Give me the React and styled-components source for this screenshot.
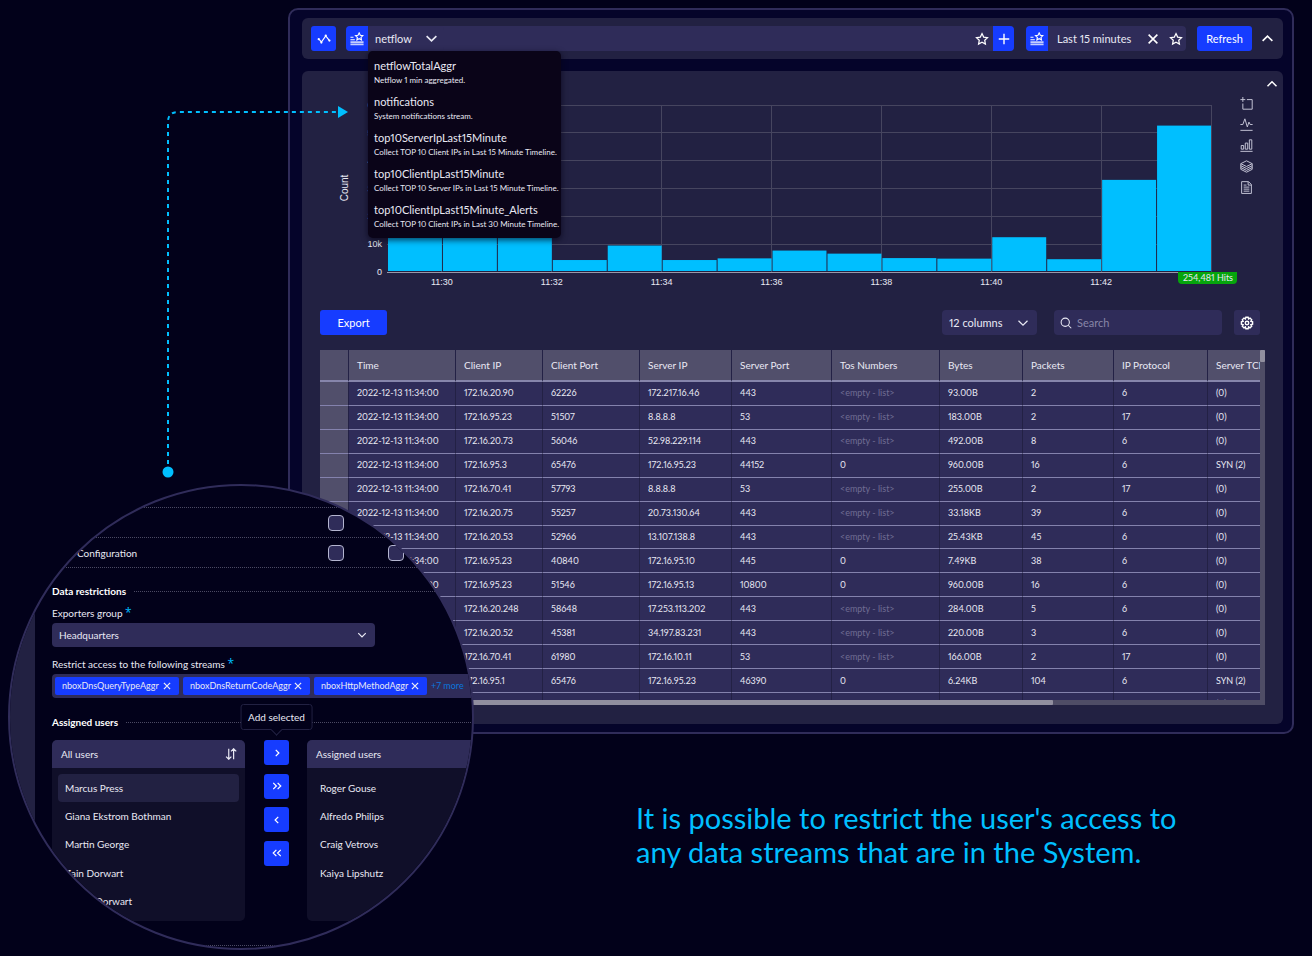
import React from "react";
import styled, { createGlobalStyle, css } from "styled-components";

const c = {
  page: "#02011a",
  frame: "#05042a",
  panel: "#222142",
  field: "#2f2c59",
  line: "#302c5a",
  dots: "#4b4a63",
  blue: "#163cff",
  cyan: "#00bfff",
  text: "#e9e9f4",
  muted: "#6f6d93",
};

const GlobalStyle = createGlobalStyle`
  *, *::before, *::after { box-sizing: border-box; }
  body {
    margin: 0;
    background: ${c.page};
    color: ${c.text};
    font-family: Lato, "Open Sans", sans-serif;
    font-size: 11px;
    font-variant-numeric: proportional-nums;
    line-height: 14px;
  }
  button, input, select { font: inherit; color: inherit; margin: 0; }
  ul { list-style: none; margin: 0; padding: 0; }
`;

const Page = styled.div`
  position: relative;
  min-height: 100vh;
  overflow: hidden;
  padding: 8px 18px 86px 288px;
`;

const Frame = styled.main`
  display: flex;
  flex-direction: column;
  gap: 12px;
  padding: 8px 9px 8px 12px;
  border: 2px solid ${c.line};
  border-radius: 10px;
  background: ${c.frame};
`;

const Toolbar = styled.header`
  display: flex;
  align-items: center;
  padding: 8px 3px 8px 9px;
  border-radius: 6px;
  background: ${c.panel};
`;

const Button = styled.button`
  display: flex;
  align-items: center;
  justify-content: center;
  flex: none;
  width: ${(p) => p.$width || 25}px;
  height: 25px;
  padding: 0;
  border: 0;
  border-radius: ${(p) => p.$radius || "3px"};
  background: ${(p) => (p.$plain ? "transparent" : p.$quiet ? c.field : c.blue)};
  color: #fff;
`;

const FieldGroup = styled.div`
  position: relative;
  display: flex;
  align-items: center;
  flex: ${(p) => (p.$grow ? "1" : "none")};
  height: 25px;
  margin-left: ${(p) => p.$gap}px;
  border-radius: 4px;
  background: ${c.field};
`;

const Actions = styled.div`
  display: flex;
  gap: 3px;
  margin-left: 11px;
`;

const SelectBox = styled.div`
  position: relative;
  display: flex;
  align-items: center;
  flex: none;
  width: ${(p) => p.$width}px;
  height: ${(p) => p.$height || 25}px;
  border-radius: 4px;
  background: ${c.field};
  svg { position: absolute; right: ${(p) => p.$inset || 8}px; pointer-events: none; }
  select {
    width: 100%;
    height: 100%;
    padding: 0 24px 0 7px;
    border: 0;
    background: transparent;
    appearance: none;
  }
`;

const Spacer = styled.div`
  flex: 1;
`;

const Period = styled.span`
  width: 93px;
  padding-left: 9px;
`;

const Menu = styled.ul`
  position: absolute;
  z-index: 1;
  top: 25px;
  left: 22px;
  width: 193px;
  padding: 8px 0 5px 6px;
  border-radius: 5px;
  background: #0a0418;
  box-shadow: 0 2px 6px rgba(5, 3, 20, 0.7);
  white-space: nowrap;
`;

const MenuItem = styled.li`
  height: 36px;
  &:last-child { height: 30px; }
  strong { display: block; font-weight: 400; }
  small { display: block; font-size: 8px; line-height: 14px; }
`;

const Panel = styled.section`
  display: flex;
  flex-direction: column;
  padding: 0 18px 19px;
  border-radius: 6px;
  background: ${c.panel};
`;

const PanelHead = styled.div`
  display: flex;
  justify-content: flex-end;
  margin-right: -18px;
  height: 24px;
`;

const ChartRow = styled.div`
  display: flex;
  padding-right: 12px;
`;

const ChartSvg = styled.svg`
  flex: 1;
  min-width: 0;
  display: block;
  font-family: "Liberation Sans", Arial, sans-serif;
  font-size: 9px;
  fill: ${c.text};
`;

const Tools = styled.div`
  display: flex;
  flex-direction: column;
  flex: none;
  width: 15px;
  gap: 7px;
  padding-top: 1px;
  button {
    display: flex;
    align-items: center;
    justify-content: flex-end;
    width: 15px;
    height: 14px;
    padding: 0;
    border: 0;
    background: transparent;
    color: #c4c4d6;
  }
`;

const Controls = styled.div`
  display: flex;
  align-items: center;
  justify-content: space-between;
  margin: 15px 5px 15px 0;
`;

const Filters = styled.div`
  display: flex;
  align-items: center;
`;

const Search = styled.label`
  display: flex;
  align-items: center;
  gap: 5px;
  width: 168px;
  height: 25px;
  margin: 0 12px 0 17px;
  padding: 0 6px;
  border-radius: 4px;
  background: ${c.field};
  input {
    flex: 1;
    min-width: 0;
    padding: 0;
    border: 0;
    outline: 0;
    background: transparent;
  }
  input::placeholder { color: #8886a8; opacity: 1; }
`;

const Grid = styled.div`
  display: grid;
  grid-template-columns: minmax(0, 1fr) 5px;
  grid-template-rows: 350px 5px;
  background: #4f4d66;
`;

const Viewport = styled.div`
  overflow: hidden;
  background: ${c.field};
`;

const Thumb = styled.div`
  background: #918f9f;
  border-radius: 1px;
  ${(p) => (p.$vertical ? css`height: 12px;` : css`width: 78%;`)}
`;

const Table = styled.table`
  table-layout: fixed;
  width: 100%;
  min-width: 988px;
  height: 367px;
  border-collapse: separate;
  border-spacing: 0;
  text-align: left;
  white-space: nowrap;
  th, td {
    padding: 0 0 0 8px;
    border-right: 1px solid #232145;
    border-bottom: 1px solid #8482ad;
    font-size: 9px;
    line-height: 12px;
    font-weight: 400;
  }
  th {
    height: 32px;
    border-bottom: 2px solid #8685ab;
    background: #514f6b;
    font-size: 10px;
  }
  td:first-child { background: #514f6b; }
`;

const Empty = styled.span`
  color: ${c.muted};
`;

const Headline = styled.p`
  margin: 67px 0 0 348px;
  color: ${c.cyan};
  font-size: 29px;
  line-height: 34px;
  font-weight: 400;
`;

const Connector = styled.svg`
  position: absolute;
  left: 160px;
  top: 104px;
`;

const Lens = styled.section`
  position: absolute;
  left: 8px;
  top: 484px;
  display: flex;
  width: 466px;
  height: 466px;
  overflow: hidden;
  border: 2px solid ${c.line};
  border-radius: 50%;
  background: ${c.page};
  font-size: 10px;
  white-space: nowrap;
`;

const LensSide = styled.div`
  flex: none;
  width: 25px;
  background: ${c.panel};
`;

const LensBody = styled.form`
  flex: none;
  display: flex;
  flex-direction: column;
  width: 470px;
  padding: 21px 0 0 17px;
`;

const Permission = styled.label`
  display: flex;
  align-items: center;
  height: 30px;
  border-top: 1px dotted ${c.dots};
  span { width: 276px; padding-left: 25px; }
`;

const Check = styled.input`
  appearance: none;
  flex: none;
  width: 16px;
  height: 16px;
  && { margin-right: 44px; }
  border: 1px solid #b4b5d0;
  border-radius: 4px;
  background: ${c.field};
`;

const Heading = styled.h2`
  display: flex;
  align-items: center;
  gap: 8px;
  height: 14px;
  margin: ${(p) => p.$top}px 0 0;
  font-size: 10px;
  line-height: 14px;
  font-weight: 700;
  color: #fff;
  &::after { content: ""; flex: 1; border-top: 1px dotted ${c.dots}; }
`;

const Label = styled.label`
  margin: ${(p) => p.$top}px 0 3px;
  line-height: 14px;
  sup {
    color: ${c.cyan};
    font-family: "Open Sans", sans-serif;
    font-size: 12px;
    line-height: 0;
    vertical-align: 0;
  }
`;

const Chips = styled.div`
  display: flex;
  align-items: center;
  gap: 4px;
  height: 24px;
  padding-left: 3px;
  border-radius: 4px;
  background: ${c.field};
  font-size: 9px;
  a { color: #0a76dc; text-decoration: none; }
`;

const Chip = styled.span`
  display: flex;
  align-items: center;
  justify-content: space-between;
  flex: none;
  width: ${(p) => p.$width}px;
  height: 18px;
  padding: 0 7px;
  border-radius: 2px;
  background: ${c.blue};
  button { display: flex; padding: 0; border: 0; background: transparent; }
`;

const Transfer = styled.div`
  display: flex;
  margin-top: 11px;
  height: 181px;
`;

const UserList = styled.div`
  display: flex;
  flex-direction: column;
  flex: none;
  width: 193px;
  overflow: hidden;
  border-radius: 5px;
  background: #100f29;
  header {
    display: flex;
    align-items: center;
    justify-content: space-between;
    height: 28px;
    padding: 0 8px 0 9px;
    background: ${c.field};
  }
  ul {
    flex: 1;
    display: grid;
    grid-template-rows: repeat(5, 1fr);
    padding: 6px;
  }
`;

const User = styled.li`
  display: flex;
  align-items: center;
  padding-left: 7px;
  border-radius: 4px;
  background: ${(p) => (p.$selected ? c.panel : "transparent")};
`;

const Moves = styled.div`
  position: relative;
  display: flex;
  flex-direction: column;
  justify-content: space-between;
  height: 126px;
  margin: 0 18px 0 19px;
`;

const Tip = styled.div`
  position: absolute;
  left: 50%;
  bottom: calc(100% + 10px);
  transform: translateX(-50%);
  padding: 5px 7px;
  border: 1px solid ${c.panel};
  border-radius: 3px;
  background: ${c.page};
  &::after {
    content: "";
    position: absolute;
    left: 50%;
    bottom: -5px;
    width: 8px;
    height: 8px;
    border: solid ${c.panel};
    border-width: 0 1px 1px 0;
    background: ${c.page};
    transform: translateX(-50%) rotate(45deg);
  }
`;

const Rule = styled.hr`
  width: 100%;
  margin: ${(p) => p.$top}px 0 0;
  border: 0;
  border-top: 1px dotted ${c.dots};
`;

const icons = {
  trend: (
    <>
      <path d="M2.500 8.500L5 11.500l5-7 4 5" />
      <g fill="currentColor" stroke="none">
        <circle cx="2" cy="8.200" r="1.300" />
        <circle cx="5" cy="12" r="1.300" />
        <circle cx="10" cy="4.200" r="1.300" />
        <circle cx="14.200" cy="9.800" r="1.300" />
      </g>
    </>
  ),
  star: <path d="M8 1.8l1.9 4 4.4.6-3.2 3 .8 4.4L8 11.7l-3.9 2.1.8-4.4-3.2-3 4.4-.6z" />,
  savedQuery: (
    <>
      <path d="M10.500 1l1.300 2.700 2.900.4-2.100 2 .5 2.900-2.600-1.400L7.900 9l.5-2.900-2.100-2 2.900-.4z" />
      <path d="M.5 6h3.500M.5 8.800h5" />
      <path d="M.5 11.500h15M.5 14.200h15" strokeWidth="2" strokeOpacity=".75" />
    </>
  ),
  plus: <path d="M8 2v12M2 8h12" />,
  close: <path d="M3 3l10 10M13 3L3 13" />,
  down: <path d="M2 5l6 6 6-6" />,
  up: <path d="M2 11l6-6 6 6" />,
  right: <path d="M6 3l5 5-5 5" />,
  left: <path d="M10 3L5 8l5 5" />,
  rights: <path d="M2 3l5 5-5 5M9 3l5 5-5 5" />,
  lefts: <path d="M7 3L2 8l5 5M14 3L9 8l5 5" />,
  search: (
    <>
      <circle cx="7" cy="7" r="5.500" />
      <path d="M11 11l4 4" />
    </>
  ),
  gear: (
    <>
      <path d="M6.700 1.500h2.600l.5 1.900 1.700-1 1.900 1.900-1 1.700 2 .6v2.700l-2 .6 1 1.700-1.900 1.900-1.700-1-.5 2H6.700l-.5-2-1.700 1-1.900-1.900 1-1.700-2-.6V6.600l2-.6-1-1.700 1.900-1.900 1.700 1z" />
      <circle cx="8" cy="8" r="2" />
    </>
  ),
  sort: <path d="M5 1v14M1.500 11.500L5 15l3.500-3.500M11.500 15V1M8 4.500L11.500 1 15 4.500" />,
  zoomArea: <path d="M3.500 0v6M.5 3.200h6M3.500 8v7h11.500V3.200H8.500" />,
  pulse: <path d="M.5 8h3l2.500-7 3 10 2-6 1.500 3h3M.5 15.200h15" />,
  bars: <path d="M.5 15.200h15M1.500 12.500V8h3v4.500zM6.500 12.500V5h3v7.500zM11.500 12.500V1h3v11.500z" />,
  layers: (
    <path d="M8 1l7 3.500L8 8 1 4.500zM1 7l7 3.500L15 7M1 9.300l7 3.500 7-3.500M1 11.500L8 15l7-3.500M1 4.500v7M15 4.500v7" />
  ),
  page: <path d="M2 .8h8.500l3.500 3.500v11H2zM10 1v4h4M4.500 5H8M4.500 7.500h7M4.500 10h7M4.500 12.500h7" />,
};

function Icon({ name, size = 14, weight = 1.4 }) {
  return (
    <svg width={size} height={size} viewBox="0 0 16 16" fill="none" stroke="currentColor" strokeWidth={weight} aria-hidden="true">
      {icons[name]}
    </svg>
  );
}

const streams = [
  ["netflowTotalAggr", "Netflow 1 min aggregated."],
  ["notifications", "System notifications stream."],
  ["top10ServerIpLast15Minute", "Collect TOP 10 Client IPs in Last 15 Minute Timeline."],
  ["top10ClientIpLast15Minute", "Collect TOP 10 Server IPs in Last 15 Minute Timeline."],
  ["top10ClientIpLast15Minute_Alerts", "Collect TOP 10 Client IPs in Last 30 Minute Timeline."],
];

const columns = [
  ["", 29], ["Time", 107], ["Client IP", 87], ["Client Port", 97], ["Server IP", 92], ["Server Port", 100],
  ["Tos Numbers", 108], ["Bytes", 83], ["Packets", 91], ["IP Protocol", 94], ["Server TCP Flags", 100],
];

const rows = [
  ["172.16.20.90", "62226", "172.217.16.46", "443", "", "93.00B", "2", "6", "(0)"],
  ["172.16.95.23", "51507", "8.8.8.8", "53", "", "183.00B", "2", "17", "(0)"],
  ["172.16.20.73", "56046", "52.98.229.114", "443", "", "492.00B", "8", "6", "(0)"],
  ["172.16.95.3", "65476", "172.16.95.23", "44152", "0", "960.00B", "16", "6", "SYN (2)"],
  ["172.16.70.41", "57793", "8.8.8.8", "53", "", "255.00B", "2", "17", "(0)"],
  ["172.16.20.75", "55257", "20.73.130.64", "443", "", "33.18KB", "39", "6", "(0)"],
  ["172.16.20.53", "52966", "13.107.138.8", "443", "", "25.43KB", "45", "6", "(0)"],
  ["172.16.95.23", "40840", "172.16.95.10", "445", "0", "7.49KB", "38", "6", "(0)"],
  ["172.16.95.23", "51546", "172.16.95.13", "10800", "0", "960.00B", "16", "6", "(0)"],
  ["172.16.20.248", "58648", "17.253.113.202", "443", "", "284.00B", "5", "6", "(0)"],
  ["172.16.20.52", "45381", "34.197.83.231", "443", "", "220.00B", "3", "6", "(0)"],
  ["172.16.70.41", "61980", "172.16.10.11", "53", "", "166.00B", "2", "17", "(0)"],
  ["172.16.95.1", "65476", "172.16.95.23", "46390", "0", "6.24KB", "104", "6", "SYN (2)"],
  ["172.16.95.1", "65476", "172.16.95.23", "46390", "0", "6.24KB", "104", "6", "(0)"],
];

const counts = [15.5, 15.5, 15.5, 4.3, 9.5, 4.3, 4.9, 7.7, 6.6, 5, 4.8, 12.5, 4.6, 33.1, 52.6];
const plot = { left: 67, right: 891, top: 10, bottom: 177 };

function Chart() {
  const step = (plot.right - plot.left) / counts.length;
  const unit = (plot.bottom - plot.top) / 60;
  const levels = [0, 10, 20, 30, 40, 50, 60];
  const ticks = ["11:30", "11:32", "11:34", "11:36", "11:38", "11:40", "11:42"];
  return (
    <ChartSvg viewBox="0 0 918 200" role="img" aria-label="Flow count by minute">
      <g shapeRendering="crispEdges">
        {levels.map((n) => (
          <path key={n} d={`M${plot.left} ${plot.bottom - n * unit}H${plot.right}`} stroke={n ? "#46455f" : "#9a99aa"} />
        ))}
        {[...ticks, ""].map((t, i) => (
          <path key={i} d={`M${plot.left + (i * 2 + 1) * step} ${plot.top}V${plot.bottom}`} stroke="#46455f" />
        ))}
      </g>
      {counts.map((n, i) => (
        <rect key={i} x={plot.left + i * step + 1} y={plot.bottom - n * unit} width={step - 1} height={n * unit - 1} fill={c.cyan} />
      ))}
      {levels.map((n) => (
        <text key={n} x="62" y={plot.bottom - n * unit + 3} textAnchor="end">{n ? `${n}k` : "0"}</text>
      ))}
      {ticks.map((t, i) => (
        <text key={t} x={plot.left + (i * 2 + 1) * step} y="190" textAnchor="middle">{t}</text>
      ))}
      <text transform="translate(28 93) rotate(-90)" textAnchor="middle" fontSize="10">Count</text>
      <path d="M858 177h59v8a4 4 0 0 1-4 4h-51a4 4 0 0 1-4-4z" fill="#06a50c" />
      <text x="888" y="186" textAnchor="middle" fontFamily="Lato, sans-serif">254,481 Hits</text>
    </ChartSvg>
  );
}

function StreamTable() {
  return (
    <Grid>
      <Viewport>
        <Table>
          <colgroup>
            {columns.map(([name, width]) => <col key={name} style={{ width }} />)}
          </colgroup>
          <thead>
            <tr>{columns.map(([name]) => <th key={name} scope="col">{name}</th>)}</tr>
          </thead>
          <tbody>
            {rows.map((row, i) => (
              <tr key={i}>
                <td />
                <td>2022-12-13 11:34:00</td>
                {row.map((cell, j) => <td key={j}>{cell || <Empty>&lt;empty - list&gt;</Empty>}</td>)}
              </tr>
            ))}
          </tbody>
        </Table>
      </Viewport>
      <Thumb $vertical />
      <Thumb />
    </Grid>
  );
}

function AccessLens() {
  return (
    <Lens aria-label="Access restrictions">
      <LensSide />
      <LensBody>
        <Permission>
          <span />
          <Check type="checkbox" aria-label="Read" />
        </Permission>
        <Permission>
          <span>Configuration</span>
          <Check type="checkbox" />
          <Check type="checkbox" aria-label="Write" />
        </Permission>
        <Rule $top={0} />
        <Heading $top={16}>Data restrictions</Heading>
        <Label $top={8} htmlFor="group">Exporters group <sup>*</sup></Label>
        <SelectBox $width={323} $height={24}>
          <select id="group"><option>Headquarters</option></select>
          <Icon name="down" size={10} weight={2} />
        </SelectBox>
        <Label $top={10} as="p">Restrict access to the following streams <sup>*</sup></Label>
        <Chips>
          {[["nboxDnsQueryTypeAggr", 124], ["nboxDnsReturnCodeAggr", 127], ["nboxHttpMethodAggr", 113]].map(([name, width]) => (
            <Chip key={name} $width={width}>
              {name}
              <button type="button" aria-label={`Remove ${name}`}><Icon name="close" size={10} weight={2} /></button>
            </Chip>
          ))}
          <a href="#streams">+7 more</a>
        </Chips>
        <Heading $top={17}>Assigned users</Heading>
        <Transfer>
          <UserList>
            <header>All users <Icon name="sort" size={12} weight={1.6} /></header>
            <ul>
              {["Marcus Press", "Giana Ekstrom Bothman", "Martin George", "Zain Dorwart", "Emery Dorwart"].map((name, i) => (
                <User key={name} $selected={i === 0}>{name}</User>
              ))}
            </ul>
          </UserList>
          <Moves>
            <Tip role="tooltip">Add selected</Tip>
            <Button type="button" aria-label="Add selected"><Icon name="right" size={10} weight={2} /></Button>
            <Button type="button" aria-label="Add all"><Icon name="rights" size={10} weight={2} /></Button>
            <Button type="button" aria-label="Remove selected"><Icon name="left" size={10} weight={2} /></Button>
            <Button type="button" aria-label="Remove all"><Icon name="lefts" size={10} weight={2} /></Button>
          </Moves>
          <UserList>
            <header>Assigned users</header>
            <ul>
              {["Roger Gouse", "Alfredo Philips", "Craig Vetrovs", "Kaiya Lipshutz"].map((name) => (
                <User key={name}>{name}</User>
              ))}
            </ul>
          </UserList>
        </Transfer>
        <Rule $top={24} />
      </LensBody>
    </Lens>
  );
}

export default function App() {
  return (
    <Page>
      <GlobalStyle />
      <Frame>
        <Toolbar>
          <Button aria-label="Trend"><Icon name="trend" /></Button>
          <FieldGroup $grow $gap={10}>
            <Button $width={22} $radius="4px 0 0 4px" aria-label="Saved streams"><Icon name="savedQuery" weight={1.3} /></Button>
            <SelectBox $width={76} $inset={6}>
              <select aria-label="Stream"><option>netflow</option></select>
              <Icon name="down" size={13} weight={2} />
            </SelectBox>
            <Spacer />
            <Button $plain $width={22} aria-label="Favourite stream"><Icon name="star" /></Button>
            <Button $width={21} $radius="0 4px 4px 0" aria-label="Add filter"><Icon name="plus" weight={1.6} /></Button>
            <Menu>
              {streams.map(([name, note]) => (
                <MenuItem key={name}><strong>{name}</strong><small>{note}</small></MenuItem>
              ))}
            </Menu>
          </FieldGroup>
          <FieldGroup $gap={12}>
            <Button $width={22} $radius="4px 0 0 4px" aria-label="Saved periods"><Icon name="savedQuery" weight={1.3} /></Button>
            <Period>Last 15 minutes</Period>
            <Button $plain $width={24} aria-label="Clear period"><Icon name="close" weight={1.8} /></Button>
            <Button $plain $width={21} aria-label="Favourite period"><Icon name="star" /></Button>
          </FieldGroup>
          <Actions>
            <Button $width={55}>Refresh</Button>
            <Button $plain aria-label="Collapse toolbar"><Icon name="up" size={13} weight={2} /></Button>
          </Actions>
        </Toolbar>
        <Panel>
          <PanelHead>
            <Button $plain $width={22} aria-label="Collapse chart"><Icon name="up" size={12} weight={2} /></Button>
          </PanelHead>
          <ChartRow>
            <Chart />
            <Tools>
              {["zoomArea", "pulse", "bars", "layers", "page"].map((name) => (
                <button key={name} aria-label={name}><Icon name={name} size={13} weight={1.2} /></button>
              ))}
            </Tools>
          </ChartRow>
          <Controls>
            <Button $width={67}>Export</Button>
            <Filters>
              <SelectBox $width={95}>
                <select aria-label="Visible columns"><option>12 columns</option></select>
                <Icon name="down" size={12} weight={1.6} />
              </SelectBox>
              <Search>
                <Icon name="search" size={12} />
                <input type="search" placeholder="Search" aria-label="Search" />
              </Search>
              <Button $quiet $width={26} aria-label="Table settings"><Icon name="gear" weight={1.6} /></Button>
            </Filters>
          </Controls>
          <StreamTable />
        </Panel>
      </Frame>
      <Headline>
        It is possible to restrict the user's access to
        <br />
        any data streams that are in the System.
      </Headline>
      <AccessLens />
      <Connector width="190" height="376" viewBox="0 0 190 376" fill="none" aria-hidden="true">
        <path d="M8 360V18q0-10 10-10H178" stroke={c.cyan} strokeWidth="2" strokeDasharray="4 4" />
        <path d="M178 2l10 6-10 6z" fill={c.cyan} />
        <circle cx="8" cy="368" r="5.500" fill={c.cyan} />
      </Connector>
    </Page>
  );
}
